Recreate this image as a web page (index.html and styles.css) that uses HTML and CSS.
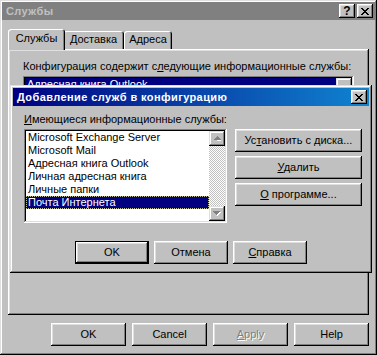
FILE: index.html
```html
<!DOCTYPE html>
<html lang="ru">
<head>
    <meta charset="UTF-8">
    <title>Службы</title>
    <link rel="stylesheet" href="styles.css">
</head>
<body>
    <div class="window main-window">
        <div class="titlebar inactive">
            <span class="title">Службы</span>
            <div class="title-buttons">
                <div class="tbtn help-btn">?</div>
                <div class="tbtn">
                    <svg width="8" height="7" viewBox="0 0 8 7"><path d="M0 0h2v1h1v1h2v-1h1v-1h2v1h-1v1h-1v1h-1v1h1v1h1v1h1v1h-2v-1h-1v-1h-2v1h-1v1h-2v-1h1v-1h1v-1h1v-1h-1v-1h-1v-1h-1z" fill="#000"/></svg>
                </div>
            </div>
        </div>

        <div class="main-body">
            <div class="tabs">
                <div class="tab tab-services selected">Службы</div>
                <div class="tab tab-delivery">Доставка</div>
                <div class="tab tab-address">Адреса</div>
            </div>
            <div class="tab-panel">
                <p class="label">Конфигурация содержит с<u>л</u>едующие информационные службы:</p>
                <div class="listbox services-list">
                    <div class="list-items">
                        <div class="item selected">Адресная книга Outlook</div>
                    </div>
                    <div class="scrollbar">
                        <div class="sbtn"></div>
                        <div class="track"></div>
                    </div>
                </div>
            </div>
            <div class="actions main-actions">
                <div class="btn"><span>OK</span></div>
                <div class="btn"><span>Cancel</span></div>
                <div class="btn disabled"><span><u>A</u>pply</span></div>
                <div class="btn"><span>Help</span></div>
            </div>
        </div>

        <!-- диалог поверх окна -->
        <div class="window add-dialog">
            <div class="titlebar active">
                <span class="title">Добавление служб в конфигурацию</span>
                <div class="title-buttons">
                    <div class="tbtn">
                        <svg width="8" height="7" viewBox="0 0 8 7"><path d="M0 0h2v1h1v1h2v-1h1v-1h2v1h-1v1h-1v1h-1v1h1v1h1v1h1v1h-2v-1h-1v-1h-2v1h-1v1h-2v-1h1v-1h1v-1h1v-1h-1v-1h-1v-1h-1z" fill="#000"/></svg>
                    </div>
                </div>
            </div>
            <div class="dialog-content">
                <p class="label"><u>И</u>меющиеся информационные службы:</p>
                <div class="dialog-row">
                    <div class="listbox available-list">
                        <div class="list-items">
                            <div class="item">Microsoft Exchange Server</div>
                            <div class="item">Microsoft Mail</div>
                            <div class="item">Адресная книга Outlook</div>
                            <div class="item">Личная адресная книга</div>
                            <div class="item">Личные папки</div>
                            <div class="item selected focused">Почта Интернета</div>
                        </div>
                        <div class="scrollbar">
                            <div class="sbtn">
                                <svg width="7" height="5" viewBox="0 0 7 5"><path d="M4 1h1v1h1v1h1v1h1v1h-5z" fill="#fff"/><path d="M3 0h1v1h1v1h1v1h1v1h-7v-1h1v-1h1v-1h1z" fill="#808080"/></svg>
                            </div>
                            <div class="track"></div>
                            <div class="sbtn">
                                <svg width="8" height="5" viewBox="0 0 8 5"><path d="M1 1h7v1h-1v1h-1v1h-1v1h-1z" fill="#fff"/><path d="M0 0h7v1h-1v1h-1v1h-1v1h-1v-1h-1v-1h-1v-1h-1z" fill="#808080"/></svg>
                            </div>
                        </div>
                    </div>
                    <div class="side-buttons">
                        <div class="btn wide"><span>Ус<u>т</u>ановить с диска...</span></div>
                        <div class="btn wide"><span><u>У</u>далить</span></div>
                        <div class="btn wide"><span><u>О</u> программе...</span></div>
                    </div>
                </div>
            </div>
            <div class="actions dialog-actions">
                <div class="btn default"><span>OK</span></div>
                <div class="btn"><span>Отмена</span></div>
                <div class="btn"><span><u>С</u>правка</span></div>
            </div>
        </div>
    </div>
</body>
</html>
```

FILE: styles.css
```css
* {
    box-sizing: border-box;
}

body {
    margin: 0;
    font-family: "Liberation Sans", Arial, sans-serif;
    font-size: 11px;
    color: #000;
    background: #c0c0c0;
}

p {
    margin: 0;
}

u {
    text-underline-offset: 1px;
}

.window {
    background: #c0c0c0;
    box-shadow: inset -1px -1px #000, inset 1px 1px #dfdfdf, inset -2px -2px #808080, inset 2px 2px #fff;
}

.main-window {
    position: relative;
    width: 377px;
    height: 355px;
    padding: 2px;
}

.titlebar {
    display: flex;
    align-items: center;
    justify-content: space-between;
    height: 18px;
    padding: 0 2px 0 4px;
    font-weight: bold;
    letter-spacing: 0.4px;
}

.titlebar.inactive {
    background: #808080;
    color: #c0c0c0;
}

.titlebar.active {
    background: linear-gradient(90deg, #000080, #1084d0);
    color: #fff;
}

.title-buttons {
    display: flex;
    gap: 2px;
}

.tbtn {
    display: flex;
    align-items: center;
    justify-content: center;
    width: 16px;
    height: 14px;
    background: #c0c0c0;
    color: #000;
    box-shadow: inset -1px -1px #000, inset 1px 1px #fff, inset -2px -2px #808080, inset 2px 2px #dfdfdf;
}

.help-btn {
    font-size: 12px;
    font-weight: bold;
    letter-spacing: 0;
    padding-bottom: 1px;
}

.main-body {
    padding: 9px 6px 0 6px;
}

/* вкладки */
.tabs {
    display: flex;
    align-items: flex-end;
    height: 20px;
    padding-left: 2px;
}

.tab {
    height: 18px;
    line-height: 17px;
    text-align: center;
    border-radius: 3px 3px 0 0;
    background: #c0c0c0;
    box-shadow: inset 1px 1px #fff, inset -1px 0 #000, inset -2px 0 #808080;
}

.tab.selected {
    position: relative;
    z-index: 1;
    height: 21px;
    margin: 0 -2px -1px -2px;
    line-height: 19px;
    padding-bottom: 2px;
}

.tab-services {
    width: 57px;
}

.tab-delivery {
    width: 61px;
}

.tab-address {
    width: 48px;
}

.tab-panel {
    height: 266px;
    padding: 11px 15px;
    box-shadow: inset -1px -1px #000, inset 1px 1px #fff, inset -2px -2px #808080, inset 2px 2px #dfdfdf;
}

.label {
    line-height: 13px;
    margin-bottom: 3px;
}

/* списки */
.listbox {
    display: flex;
    padding: 2px;
    background: #fff;
    box-shadow: inset -1px -1px #fff, inset 1px 1px #808080, inset -2px -2px #dfdfdf, inset 2px 2px #000;
}

.services-list {
    height: 180px;
}

.available-list {
    width: 203px;
    height: 94px;
}

.list-items {
    flex: 1;
}

.item {
    height: 13px;
    line-height: 13px;
    padding-left: 2px;
    white-space: nowrap;
}

.item.selected {
    background: #000080;
    color: #fff;
}

.item.focused {
    outline: 1px dotted #c0c0a0;
    outline-offset: -1px;
}

.scrollbar {
    display: flex;
    flex-direction: column;
    width: 16px;
}

.sbtn {
    display: flex;
    align-items: center;
    justify-content: center;
    width: 16px;
    height: 15px;
    background: #c0c0c0;
    box-shadow: inset -1px -1px #000, inset 1px 1px #dfdfdf, inset -2px -2px #808080, inset 2px 2px #fff;
}

.track {
    flex: 1;
    background: repeating-conic-gradient(#c0c0c0 0 25%, #fff 0 50%);
    background-size: 2px 2px;
}

/* кнопки */
.btn {
    display: flex;
    align-items: center;
    justify-content: center;
    width: 75px;
    height: 23px;
    padding-bottom: 1px;
    white-space: nowrap;
    background: #c0c0c0;
    box-shadow: inset -1px -1px #000, inset 1px 1px #fff, inset -2px -2px #808080, inset 2px 2px #dfdfdf;
}

.btn.wide {
    width: 127px;
}

.btn.disabled {
    color: #808080;
    text-shadow: 1px 1px #fff;
}

.btn.default {
    border: 1px solid #000;
}

.actions {
    display: flex;
    gap: 6px;
}

.main-actions {
    justify-content: flex-end;
    margin-top: 8px;
}

/* диалог "Добавление служб" */
.add-dialog {
    position: absolute;
    left: 10px;
    top: 85px;
    z-index: 2;
    width: 362px;
    height: 188px;
    padding: 3px;
}

.dialog-content {
    padding: 7px 7px 0 11px;
}

.dialog-row {
    display: flex;
    gap: 8px;
}

.side-buttons {
    display: flex;
    flex-direction: column;
    gap: 4px;
}

.dialog-actions {
    justify-content: center;
    gap: 5px;
    margin-top: 18px;
}

.dialog-actions .btn {
    width: 74px;
}
```
